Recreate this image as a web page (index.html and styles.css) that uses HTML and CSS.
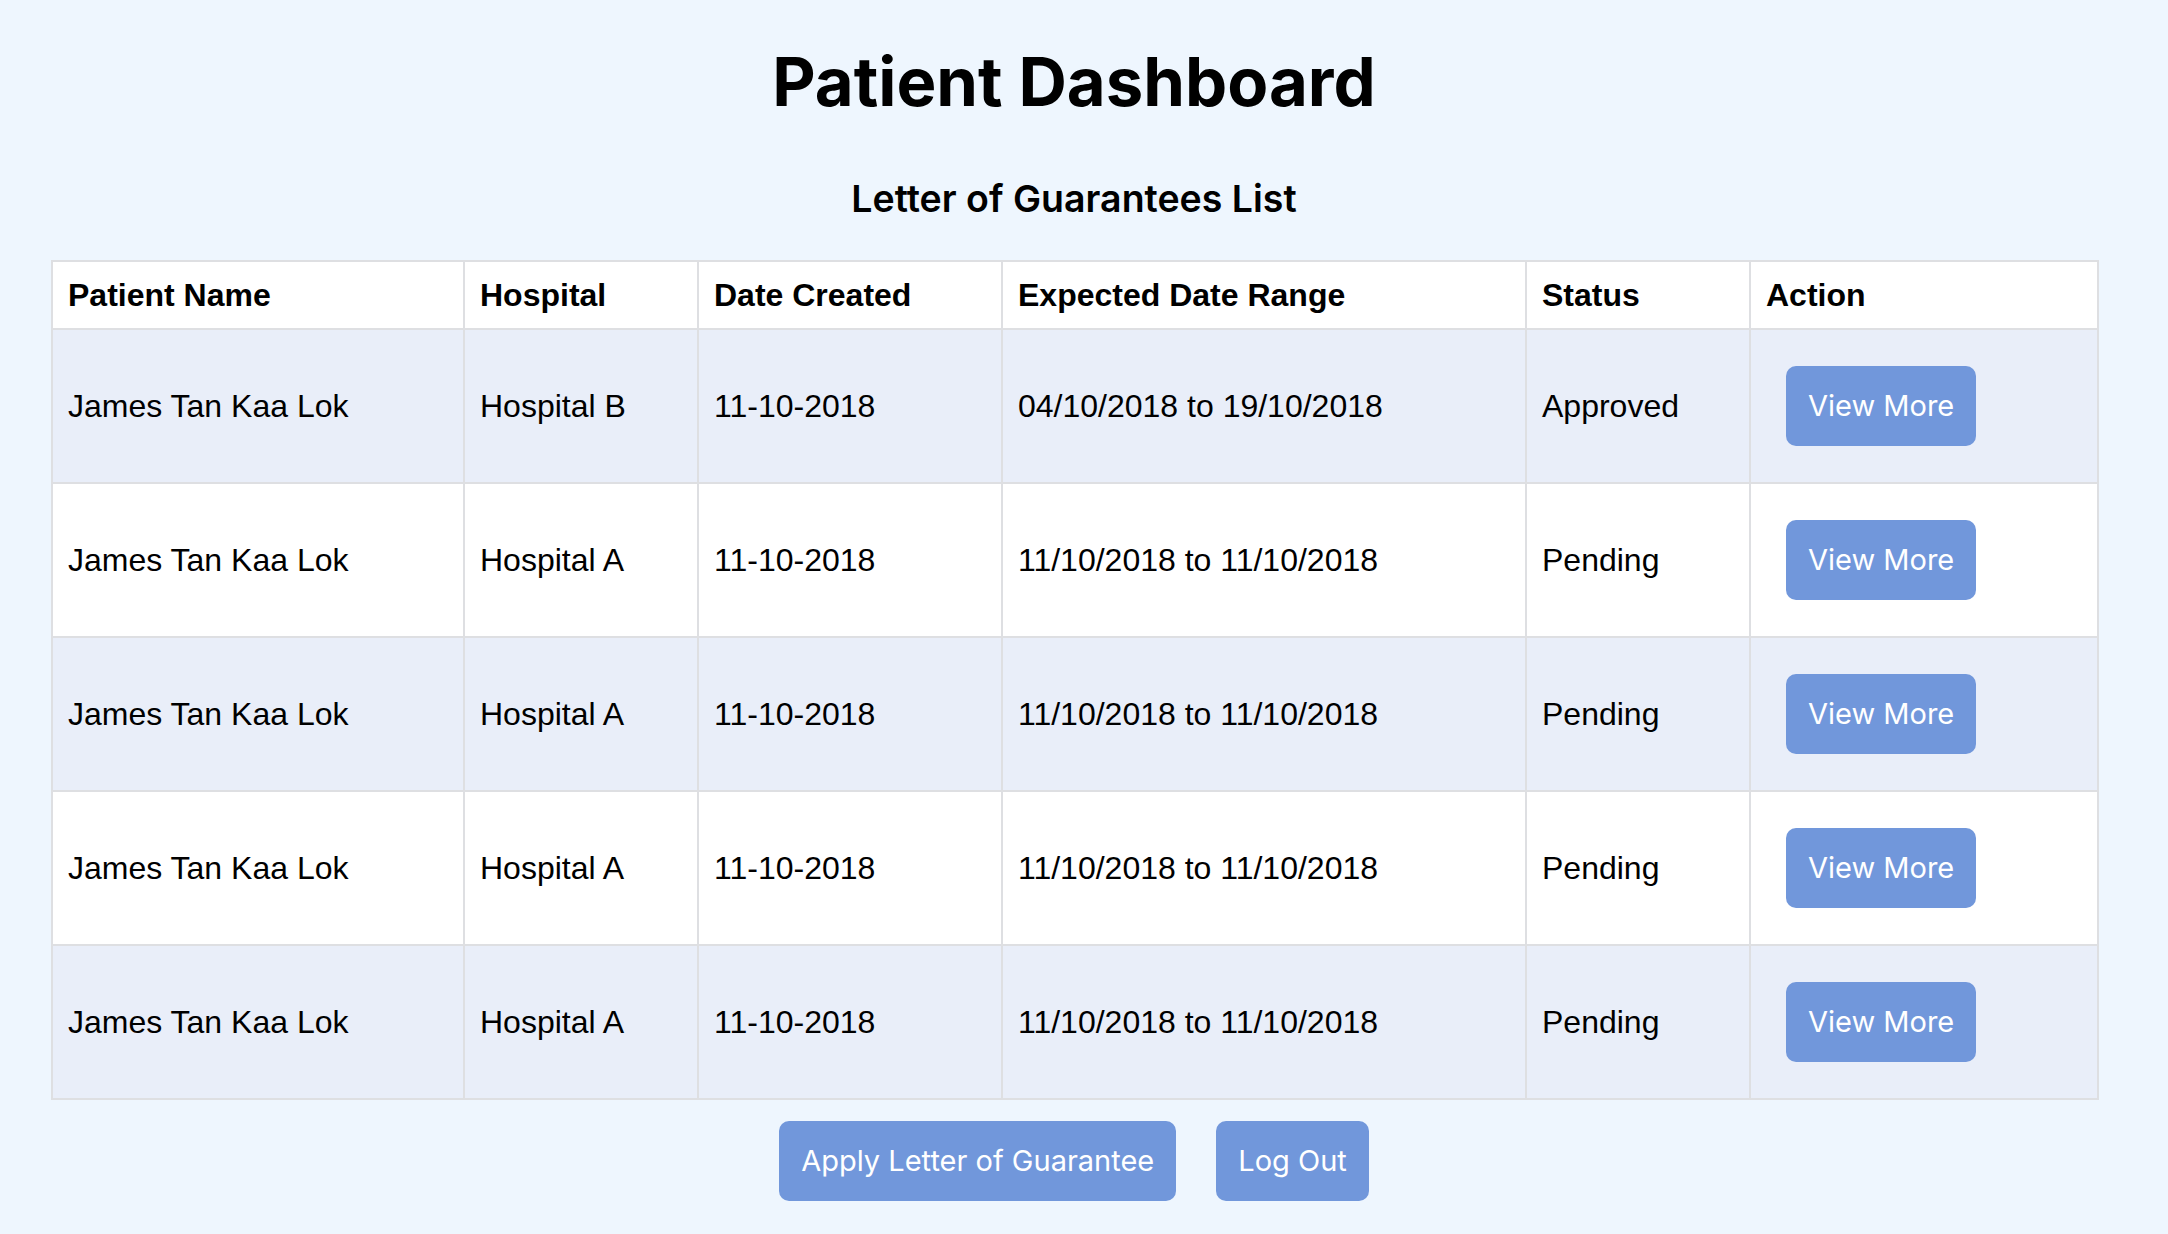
FILE: index.html
```html
<!DOCTYPE html>
<html lang="en">
<head>
<meta charset="utf-8">
<title>Patient Dashboard</title>
<link rel="stylesheet" href="styles.css">
</head>
<body>
<main class="page">
  <h1 class="title">Patient Dashboard</h1>
  <h2 class="subtitle">Letter of Guarantees List</h2>
  <table class="log-table">
    <colgroup>
      <col class="c-name"><col class="c-hosp"><col class="c-date"><col class="c-range"><col class="c-status"><col class="c-action">
    </colgroup>
    <thead>
      <tr><th>Patient Name</th><th>Hospital</th><th>Date Created</th><th>Expected Date Range</th><th>Status</th><th>Action</th></tr>
    </thead>
    <tbody>
      <tr><td>James Tan Kaa Lok</td><td>Hospital B</td><td>11-10-2018</td><td>04/10/2018 to 19/10/2018</td><td>Approved</td><td><button class="btn btn-row">View More</button></td></tr>
      <tr><td>James Tan Kaa Lok</td><td>Hospital A</td><td>11-10-2018</td><td>11/10/2018 to 11/10/2018</td><td>Pending</td><td><button class="btn btn-row">View More</button></td></tr>
      <tr><td>James Tan Kaa Lok</td><td>Hospital A</td><td>11-10-2018</td><td>11/10/2018 to 11/10/2018</td><td>Pending</td><td><button class="btn btn-row">View More</button></td></tr>
      <tr><td>James Tan Kaa Lok</td><td>Hospital A</td><td>11-10-2018</td><td>11/10/2018 to 11/10/2018</td><td>Pending</td><td><button class="btn btn-row">View More</button></td></tr>
      <tr><td>James Tan Kaa Lok</td><td>Hospital A</td><td>11-10-2018</td><td>11/10/2018 to 11/10/2018</td><td>Pending</td><td><button class="btn btn-row">View More</button></td></tr>
    </tbody>
  </table>
  <div class="actions">
    <button class="btn">Apply Letter of Guarantee</button>
    <button class="btn">Log Out</button>
  </div>
</main>
</body>
</html>
```

FILE: styles.css
```css
html, body {
  margin: 0;
  padding: 0;
  background: #eef6fe;
}
body {
  font-family: "Liberation Sans", Arial, sans-serif;
  color: #000;
}
.page {
  width: 2046px;
  margin: 0 0 0 51px;
  padding: 41px 0 0;
}
.title {
  margin: 0;
  font-family: Inter, "Noto Sans", sans-serif;
  font-weight: 700;
  font-size: 67px;
  line-height: 81px;
  text-align: center;
}
.subtitle {
  margin: 54px 0 0;
  font-family: Inter, "Noto Sans", sans-serif;
  font-weight: 600;
  font-size: 37.5px;
  line-height: 46px;
  text-align: center;
}
.log-table {
  margin-top: 38px;
  width: 2046px;
  border-collapse: collapse;
  table-layout: fixed;
  background: #fff;
  font-size: 32px;
}
.c-name { width: 412px; }
.c-hosp { width: 234px; }
.c-date { width: 304px; }
.c-range { width: 524px; }
.c-status { width: 224px; }
.c-action { width: 348px; }
.log-table th,
.log-table td {
  border: 2px solid #dedfe2;
  padding: 16px 15px;
  text-align: left;
  vertical-align: middle;
  line-height: 36px;
}
.log-table th {
  font-weight: 700;
  line-height: 34px;
}
.log-table tbody tr:nth-child(odd) {
  background: #e9eef9;
}
.btn {
  font-family: Inter, "Noto Sans", sans-serif;
  font-size: 29px;
  line-height: 36px;
  color: #fff;
  background: #7197db;
  border: none;
  border-radius: 10px;
  height: 80px;
  padding: 0 22px;
  cursor: pointer;
}
.btn-row {
  margin: 20px;
}
.actions {
  display: flex;
  justify-content: center;
  gap: 40px;
  margin-top: 21px;
}
```
